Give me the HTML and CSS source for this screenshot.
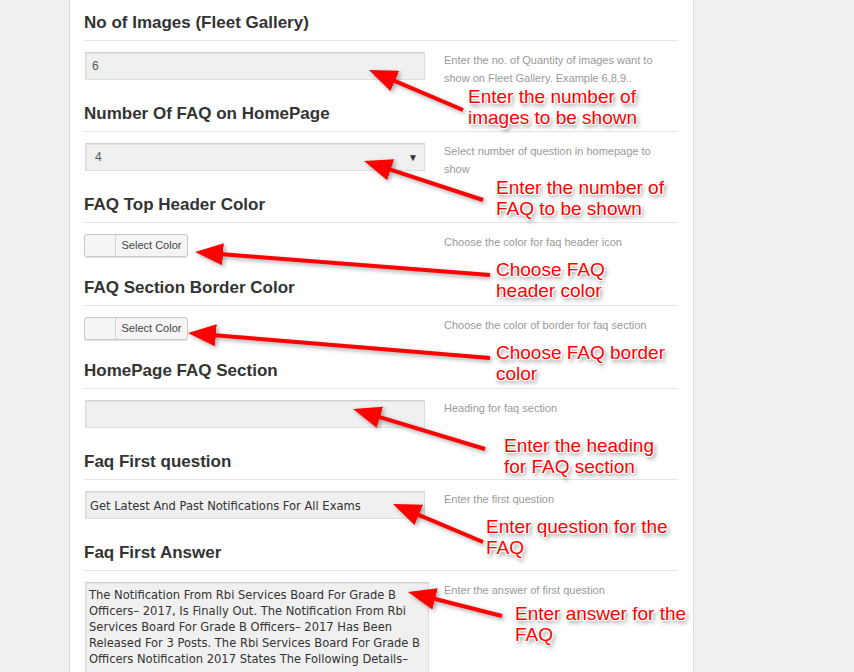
FILE: index.html
```html
<!DOCTYPE html>
<html lang="en">
<head>
  <meta charset="UTF-8">
  <title>FAQ Settings</title>
  <link rel="stylesheet" href="styles.css">
</head>
<body>

<div class="panel">

  <div class="group">
    <h3>No of Images (Fleet Gallery)</h3>
    <div class="row">
      <input class="field" type="text" value="6">
      <p class="help">Enter the no. of Quantity of images want to show on Fleet Gallery. Example 6,8,9..</p>
    </div>
  </div>

  <div class="group">
    <h3>Number Of FAQ on HomePage</h3>
    <div class="row">
      <div class="field select"><span>4</span><span class="caret">&#9660;</span></div>
      <p class="help">Select number of question in homepage to show</p>
    </div>
  </div>

  <div class="group">
    <h3>FAQ Top Header Color</h3>
    <div class="row row-sm">
      <button class="color-btn"><span class="swatch"></span><span class="label">Select Color</span></button>
      <p class="help">Choose the color for faq header icon</p>
    </div>
  </div>

  <div class="group">
    <h3>FAQ Section Border Color</h3>
    <div class="row row-sm">
      <button class="color-btn"><span class="swatch"></span><span class="label">Select Color</span></button>
      <p class="help">Choose the color of border for faq section</p>
    </div>
  </div>

  <div class="group">
    <h3>HomePage FAQ Section</h3>
    <div class="row">
      <input class="field" type="text" value="">
      <p class="help">Heading for faq section</p>
    </div>
  </div>

  <div class="group">
    <h3>Faq First question</h3>
    <div class="row">
      <input class="field text" type="text" value="Get Latest And Past Notifications For All Exams">
      <p class="help">Enter the first question</p>
    </div>
  </div>

  <div class="group">
    <h3>Faq First Answer</h3>
    <div class="row row-area">
      <textarea class="field area">The Notification From Rbi Services Board For Grade B Officers– 2017, Is Finally Out. The Notification From Rbi Services Board For Grade B Officers– 2017 Has Been Released For 3 Posts. The Rbi Services Board For Grade B Officers Notification 2017 States The Following Details–</textarea>
      <p class="help">Enter the answer of first question</p>
    </div>
  </div>

</div>

<!-- annotations drawn over the form -->
<svg class="arrows" width="854" height="672">
  <defs>
    <marker id="head" markerUnits="userSpaceOnUse" markerWidth="28" markerHeight="22" refX="13" refY="11" orient="auto">
      <path d="M0,0 L28,11 L0,22 z" fill="#f00"/>
    </marker>
  </defs>
  <line x1="463" y1="110" x2="382.8" y2="75.9" marker-end="url(#head)"/>
  <line x1="483" y1="200" x2="378.3" y2="165.7" marker-end="url(#head)"/>
  <line x1="490" y1="275" x2="210" y2="253.2" marker-end="url(#head)"/>
  <line x1="490" y1="358" x2="202.9" y2="334.2" marker-end="url(#head)"/>
  <line x1="485" y1="449" x2="367.4" y2="413.4" marker-end="url(#head)"/>
  <line x1="483" y1="542" x2="406.8" y2="509.8" marker-end="url(#head)"/>
  <line x1="502" y1="616" x2="422.5" y2="595.7" marker-end="url(#head)"/>
</svg>

<div class="note n1">Enter the number of<br>images to be shown</div>
<div class="note n2">Enter the number of<br>FAQ to be shown</div>
<div class="note n3">Choose FAQ<br>header color</div>
<div class="note n4">Choose FAQ border<br>color</div>
<div class="note n5">Enter the heading<br>for FAQ section</div>
<div class="note n6">Enter question for the<br>FAQ</div>
<div class="note n7">Enter answer for the<br>FAQ</div>

</body>
</html>
```

FILE: styles.css
```css
body {
  margin: 0;
  background: #f0f0f0;
  font-family: "Liberation Sans", Arial, sans-serif;
  height: 672px;
  overflow: hidden;
  position: relative;
}
.panel {
  box-sizing: border-box;
  margin-left: 69px;
  width: 625px;
  height: 672px;
  overflow: hidden;
  background: #fff;
  border-left: 1px solid #dcdcdc;
  border-right: 1px solid #dcdcdc;
  padding: 1px 15px 0 14px;
}
.group { margin-bottom: 12px; }
.group h3 {
  margin: 0;
  padding: 12px 0 7px;
  font-size: 17px;
  line-height: 20px;
  font-weight: bold;
  color: #333;
  border-bottom: 1px solid #e5e5e5;
}
.row {
  display: grid;
  grid-template-columns: 360px 222px;
  height: 28px;
  margin-top: 11px;
}
.row-sm { height: 23px; margin-bottom: -3px; }
.row-area { height: 90px; }
.help {
  margin: -1px 0 0;
  font-size: 11px;
  line-height: 18px;
  color: #999;
}
.field {
  box-sizing: border-box;
  margin: 0 0 0 1px;
  width: 340px;
  height: 28px;
  background: #f0f0f0;
  border: 1px solid #ddd;
  border-top-color: #d0d0d0;
  box-shadow: inset 1px 1px 1px rgba(0,0,0,0.06);
  padding: 0 6px;
  font-family: "Liberation Sans", Arial, sans-serif;
  font-size: 12px;
  color: #555;
  outline: none;
}
.field.text, .field.area {
  font-family: "DejaVu Sans Condensed", "DejaVu Sans", sans-serif;
  font-size: 12.8px;
  color: #333;
  padding-left: 4px;
}
.select {
  display: flex;
  align-items: center;
  justify-content: space-between;
  padding: 0 6px 0 9px;
}
.caret { font-size: 10px; color: #333; }
.field.area {
  width: 344px;
  height: 120px;
  padding: 4px 0 4px 3px;
  line-height: 16px;
  resize: none;
  overflow: hidden;
}
.color-btn {
  display: flex;
  align-items: stretch;
  width: 104px;
  height: 23px;
  padding: 0;
  margin: 0;
  border: 1px solid #c8c8c8;
  border-radius: 3px;
  background: #f5f5f5;
  box-shadow: 0 1px 1px rgba(0,0,0,0.12);
  font-family: "Liberation Sans", Arial, sans-serif;
  font-size: 11px;
  color: #444;
}
.color-btn .swatch {
  width: 30px;
  border-right: 1px solid #d5d5d5;
}
.color-btn .label {
  flex: 1;
  line-height: 21px;
  text-align: center;
}
.arrows {
  position: absolute;
  top: 0;
  left: 0;
  filter: drop-shadow(2px 2px 2px rgba(0,0,0,0.35));
}
.arrows line { stroke: #f00; stroke-width: 4; }
.note {
  position: absolute;
  font-family: "Liberation Sans", Arial, sans-serif;
  font-size: 19px;
  line-height: 21px;
  color: #f00;
  white-space: nowrap;
  text-shadow: 1px 0 0 #fff, -1px 0 0 #fff, 0 1px 0 #fff, 0 -1px 0 #fff,
    1px 1px 0 #fff, -1px -1px 0 #fff, 1px -1px 0 #fff, -1px 1px 0 #fff,
    2px 3px 4px rgba(0,0,0,0.55);
}
.n1 { left: 468px; top: 86px; }
.n2 { left: 496px; top: 177px; }
.n3 { left: 496px; top: 259px; }
.n4 { left: 496px; top: 342px; }
.n5 { left: 504px; top: 435px; }
.n6 { left: 486px; top: 516px; }
.n7 { left: 515px; top: 603px; }
```
